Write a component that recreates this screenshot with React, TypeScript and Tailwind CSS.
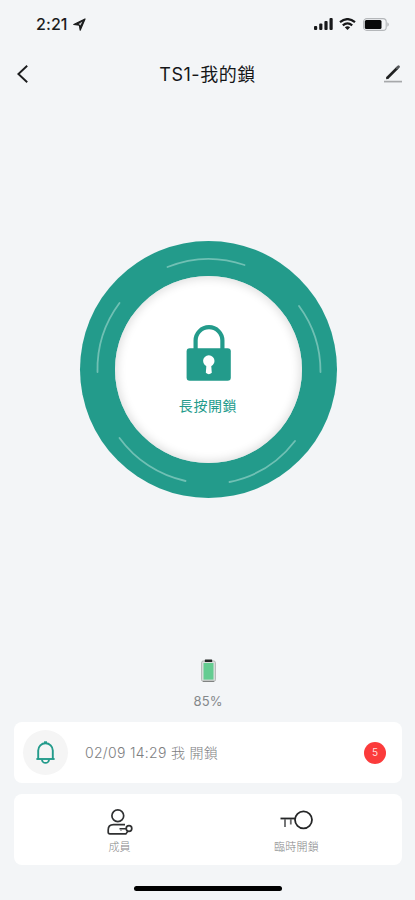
const members = { label: "成員" };
const tempUnlock = { label: "臨時開鎖" };

const ringArcs = [
  "M87.5 26A110.5 110.5 0 0 1 164.5 24",
  "M39.5 62A110.5 110.5 0 0 0 17.5 131",
  "M219 65A110.5 110.5 0 0 1 240.5 131",
  "M39.5 197A110.5 110.5 0 0 0 105.5 240",
  "M215 200A110.5 110.5 0 0 1 149.5 241",
];

function StatusBar() {
  return (
    <div className="flex h-12 items-center justify-between pl-9 pr-[26px]">
      <div className="flex items-center gap-[5px]">
        <span className="text-[16px] font-medium leading-5 tracking-[0.1px]">2:21</span>
        <svg width="13" height="13" viewBox="0 0 13 13" fill="none">
          <path d="M0.8 6.5L12 1L7.2 12.2L6.4 7.2Z" fill="#1b1c1d" stroke="#1b1c1d" strokeWidth="1.2" strokeLinejoin="round" />
          <path d="M5.6 6L9.4 3.6L7.5 7.4Z" fill="#c4c7ca" />
        </svg>
      </div>
      <div className="flex items-center">
        <svg width="19" height="12" viewBox="0 0 19 12" fill="#17181a">
          <rect x="0" y="8" width="3.2" height="4" rx="1" />
          <rect x="5.2" y="5.5" width="3.2" height="6.5" rx="1" />
          <rect x="10.4" y="3" width="3.2" height="9" rx="1" />
          <rect x="15.5" y="0" width="3.2" height="12" rx="1" />
        </svg>
        <svg className="ml-1.5" width="17" height="12" viewBox="0 0 17 12" fill="none" stroke="#17181a" strokeWidth="2.2">
          <path d="M1 4.2Q8.5 -2 16 4.2" />
          <path d="M3.8 7.4Q8.5 3.2 13.2 7.4" />
          <path d="M5.8 9.2Q8.5 7.2 11.2 9.2L8.5 12Z" fill="#17181a" stroke="none" />
        </svg>
        <svg className="ml-[7px]" width="26" height="13" viewBox="0 0 26 13" fill="none">
          <rect x="0.6" y="0.6" width="22.6" height="11.8" rx="3.2" stroke="#b4b7ba" strokeWidth="1.1" />
          <rect x="1.8" y="2" width="16.7" height="9" rx="1.5" fill="#08090a" />
          <path d="M24.5 4.3C26 5.2 26 7.8 24.5 8.7Z" fill="#9da0a3" />
        </svg>
      </div>
    </div>
  );
}

function Header() {
  return (
    <header className="grid h-[52px] grid-cols-[1fr_auto_1fr] items-center px-3.5">
      <svg className="ml-[3px]" width="11" height="18" viewBox="0 0 11 18" fill="none" stroke="#1b1c1d" strokeWidth="1.9">
        <path d="M10.2 0.8L1.4 9L10.2 17.2" />
      </svg>
      <h1 className="whitespace-nowrap pt-0.5 text-[18px] leading-6 tracking-[0.5px] text-[#151617]">TS1-我的鎖</h1>
      <svg className="-mr-px justify-self-end" width="18" height="18" viewBox="0 0 18 18" fill="none">
        <path d="M3 13.2L13.5 2.7" stroke="#202122" strokeWidth="2.7" />
        <path d="M13.2 3L14.5 1.7" stroke="#55585b" strokeWidth="2.7" strokeLinecap="round" />
        <path d="M2 14.2L2.5 11.8L4.5 13.8Z" fill="#202122" />
        <path d="M0 16.6H18" stroke="#a6a8aa" strokeWidth="1.7" />
      </svg>
    </header>
  );
}

function Padlock() {
  return (
    <svg width="45" height="56" viewBox="0 0 45 56" fill="none">
      <path d="M9.6 25V15.6A13.4 13.4 0 0 1 36.4 15.6V25" stroke="#239b8b" strokeWidth="4.2" />
      <rect x="0.6" y="23.3" width="44.2" height="32.5" rx="3.2" fill="#239b8b" />
      <circle cx="22.8" cy="36" r="5.7" fill="#fff" />
      <path d="M20.6 38H25L25.8 47.8Q22.8 50.6 19.8 47.8Z" fill="#fff" />
    </svg>
  );
}

function UnlockDial() {
  return (
    <button className="grid h-[257px] w-[257px] place-items-center rounded-full bg-[#239b8b]">
      <svg className="col-start-1 row-start-1" width="257" height="257" viewBox="0 0 257 257" fill="none">
        {ringArcs.map((d) => (
          <path key={d} d={d} stroke="#70c0b4" strokeWidth="1.8" strokeLinecap="round" />
        ))}
      </svg>
      <span className="col-start-1 row-start-1 flex h-[187px] w-[187px] flex-col items-center rounded-full bg-white pt-[49px] shadow-[inset_0_0_10px_2px_#dedede]">
        <Padlock />
        <span className="mt-[15px] text-[14px] leading-5 tracking-[0.6px] text-[#239b8b]">長按開鎖</span>
      </span>
    </button>
  );
}

function LockBattery() {
  return (
    <div className="flex flex-col items-center">
      <svg width="15" height="23" viewBox="0 0 15 23">
        <rect x="0.6" y="2" width="13.8" height="20.4" rx="1.6" fill="#dce0de" stroke="#b2b5b4" />
        <rect x="3.8" y="0.4" width="7.4" height="2.6" rx="0.6" fill="#252827" />
        <rect x="2.5" y="4" width="10" height="16.6" fill="#64cc91" />
        <path d="M2 22.3H13" stroke="#737675" />
      </svg>
      <p className="mt-[9px] text-[13px] leading-5 tracking-[0.1px] text-[#85888b]">85%</p>
    </div>
  );
}

function AlertRow() {
  return (
    <div className="flex h-[61px] items-center rounded-lg bg-white pl-[9px] pr-4">
      <div className="flex h-[45px] w-[45px] items-center justify-center rounded-full bg-[#f5f5f5]">
        <svg width="19" height="23" viewBox="0 0 19 23" fill="none" stroke="#239b8b" strokeWidth="1.9">
          <path d="M2.2 18V9.6A7.3 7.3 0 0 1 16.8 9.6V18" />
          <path d="M0.4 18H18.6" />
          <path d="M9.5 0.3V2.5" strokeWidth="3" />
          <path d="M6 18.4A3.5 3.5 0 0 0 13 18.4" />
        </svg>
      </div>
      <p className="ml-[17px] text-[14px] font-light leading-5 tracking-[0.3px] text-[#7d7e7f]">02/09 14:29 我 開鎖</p>
      <span className="ml-auto flex h-[22px] w-[22px] items-center justify-center rounded-full bg-[#fb3b3b] text-[10px] text-[#ffdcdc]">
        5
      </span>
    </div>
  );
}

function ActionPanel() {
  return (
    <div className="grid h-[71px] grid-cols-2 rounded-lg bg-white px-[17px]">
      <button className="flex flex-col items-center pt-[15px]">
        <svg className="ml-px" width="26" height="27" viewBox="0 0 26 27" fill="none" stroke="#303132" strokeWidth="1.7">
          <circle cx="10.8" cy="6.8" r="5.9" />
          <path d="M19.5 24.8H2.8Q1.2 24.8 1.2 23.2V21Q1.2 15.7 6.5 15.7H18" />
          <circle cx="22" cy="19.5" r="2.8" />
          <path d="M12.5 19.8H19M21 22L19 24.8" strokeWidth="1.5" />
          <path d="M14 20V22" stroke="#8a8b8c" strokeWidth="1.4" />
        </svg>
        <span className="mt-[3px] text-[11px] font-light leading-4 text-[#858687]">{members.label}</span>
      </button>
      <button className="flex flex-col items-center pt-4">
        <svg width="33" height="20" viewBox="0 0 33 20" fill="none" stroke="#252627" strokeWidth="1.8">
          <circle cx="23.5" cy="9.8" r="8.5" />
          <path d="M0.5 8.5H15" />
          <path d="M5 9V17M10.8 9V14.5" stroke="#68696a" />
        </svg>
        <span className="mt-[9px] text-[11px] font-light leading-4 tracking-[0.3px] text-[#858687]">{tempUnlock.label}</span>
      </button>
    </div>
  );
}

export default function App() {
  return (
    <div className="flex h-[900px] w-[415px] flex-col bg-[#f3f5f7] font-[Inter,'Noto_Sans_CJK_TC',sans-serif] text-[#1b1c1d]">
      <StatusBar />
      <Header />
      <main className="flex flex-1 flex-col pl-3.5 pr-[13px] pt-[141px]">
        <div className="flex justify-center">
          <UnlockDial />
        </div>
        <div className="mt-[161px]">
          <LockBattery />
        </div>
        <div className="mt-[11px] flex flex-col gap-[11px]">
          <AlertRow />
          <ActionPanel />
        </div>
      </main>
      <footer className="flex h-[35px] justify-center pl-px pt-[21px]">
        <div className="h-[5px] w-[148px] rounded-full bg-black" />
      </footer>
    </div>
  );
}
